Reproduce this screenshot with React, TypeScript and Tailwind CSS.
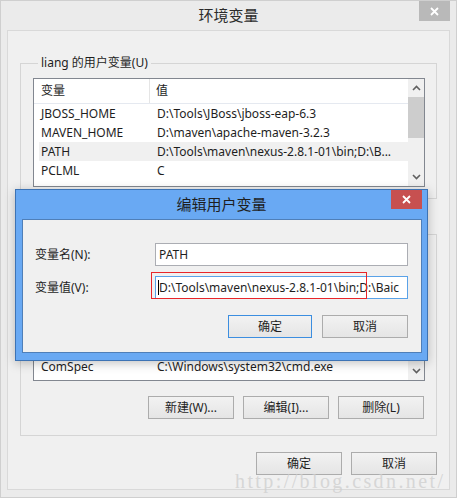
import clsx from "clsx";

const FONT = "font-['Noto_Sans','Noto_Sans_CJK_SC',sans-serif]";

function Chevron({ down }: { down?: boolean }) {
  return (
    <svg width="9" height="6" viewBox="0 0 9 6" className={clsx(down && "rotate-180")}>
      <polyline points="1,5 4.5,1.5 8,5" fill="none" stroke="#606060" strokeWidth="1.6" />
    </svg>
  );
}

function Scrollbar({ thumbTop, thumbHeight }: { thumbTop?: number; thumbHeight?: number }) {
  return (
    <div className="flex w-[16px] flex-col bg-[#f0f0f0]">
      <div className="flex h-[18px] items-center justify-center">
        <Chevron />
      </div>
      <div className="relative flex-1">
        {thumbHeight ? (
          <div className="absolute inset-x-0 bg-[#cdcdcd]" style={{ top: thumbTop, height: thumbHeight }} />
        ) : null}
      </div>
      <div className="flex h-[18px] items-center justify-center">
        <Chevron down />
      </div>
    </div>
  );
}

function Row({ name, value, selected }: { name: string; value: string; selected?: boolean }) {
  return (
    <div className={clsx("ml-[5px] flex h-[19px] shrink-0 items-center whitespace-nowrap", selected && "bg-[#f0f0f0]")}>
      <span className="w-[118px] pl-[2px]">{name}</span>
      <span className="overflow-hidden">{value}</span>
    </div>
  );
}

function VarList({
  rows,
  height,
  bottom,
  thumb,
}: {
  rows: { name: string; value: string; selected?: boolean }[];
  height: string;
  bottom?: boolean;
  thumb?: [number, number];
}) {
  return (
    <div className={clsx("flex border border-[#828790] bg-white", height)}>
      <div className="flex min-w-0 flex-1 flex-col overflow-hidden">
        <div className="flex h-[25px] shrink-0 border-b border-[#e5e9f0]">
          <div className="flex w-[116px] items-center border-r border-[#e5e5e5] pl-[7px]">变量</div>
          <div className="flex items-center pl-[6px]">值</div>
        </div>
        <div className={clsx("flex flex-1 flex-col overflow-hidden", bottom && "justify-end pb-[4px]")}>
          {rows.map((r) => (
            <Row key={r.name} {...r} />
          ))}
        </div>
      </div>
      <Scrollbar thumbTop={thumb?.[0]} thumbHeight={thumb?.[1]} />
    </div>
  );
}

function Btn({ children, primary, className }: { children: React.ReactNode; primary?: boolean; className?: string }) {
  return (
    <button
      className={clsx(
        "flex h-[23px] items-center justify-center border bg-gradient-to-b from-[#f2f2f2] to-[#e5e5e5] text-[12px] text-[#1e1e1e]",
        primary ? "border-[#3c8ee0]" : "border-[#acacac]",
        className
      )}
    >
      {children}
    </button>
  );
}

function Group({ label, children, className }: { label: string; children: React.ReactNode; className?: string }) {
  return (
    <div className={clsx("border border-[#d5d5d5] pl-[12px] pr-[11px]", className)}>
      <div className="-mt-[9px] mb-[7px] ml-[5px] w-fit bg-[#f0f0f0] px-[3px] leading-[16px]">{label}</div>
      {children}
    </div>
  );
}

function CloseX() {
  return (
    <svg width="9" height="9" viewBox="0 0 9 9">
      <path d="M1 1 L8 8 M8 1 L1 8" stroke="white" strokeWidth="1.8" />
    </svg>
  );
}

export default function App() {
  return (
    <div className={clsx("relative h-[498px] w-[457px] overflow-hidden border border-[#cfcfcf] bg-[#ebebeb] text-[12px] text-[#1e1e1e]", FONT)}>
      <div className="flex h-[29px] items-center justify-center text-[15px] text-[#2b2b2b]">环境变量</div>
      <div className="absolute right-[6px] top-0 flex h-[20px] w-[31px] items-center justify-center bg-[#b9b9b9]">
        <CloseX />
      </div>

      <div className="mx-[6px] h-[460px] border border-[#d9d9d9] bg-[#f0f0f0] px-[12px] pt-[32px]">
        <Group label="liang 的用户变量(U)" className="pb-[11px]">
          <VarList
            height="h-[109px]"
            thumb={[0, 41]}
            rows={[
              { name: "JBOSS_HOME", value: "D:\\Tools\\JBoss\\jboss-eap-6.3" },
              { name: "MAVEN_HOME", value: "D:\\maven\\apache-maven-3.2.3" },
              { name: "PATH", value: "D:\\Tools\\maven\\nexus-2.8.1-01\\bin;D:\\B...", selected: true },
              { name: "PCLML", value: "C" },
            ]}
          />
        </Group>

        <Group label="系统变量(S)" className="mt-[35px] pb-[16px]">
          <VarList
            height="h-[132px]"
            bottom
            rows={[{ name: "ComSpec", value: "C:\\Windows\\system32\\cmd.exe" }]}
          />
          <div className="mt-[15px] flex justify-end gap-[9px] pr-[1px]">
            <Btn className="w-[86px]">新建(W)...</Btn>
            <Btn className="w-[86px]">编辑(I)...</Btn>
            <Btn className="w-[86px]">删除(L)</Btn>
          </div>
        </Group>

        <div className="mt-[16px] flex justify-end gap-[9px]">
          <Btn className="w-[86px]">确定</Btn>
          <Btn className="w-[86px]">取消</Btn>
        </div>
      </div>

      {/* edit dialog */}
      <div className="absolute left-[14px] top-[188px] flex h-[172px] w-[413px] flex-col border border-[#3d73b4] bg-[#69a9f3] shadow-[0_2px_10px_rgba(0,0,0,0.25)]">
        <div className="flex h-[29px] shrink-0 items-center justify-center text-[15px] text-[#1e1e1e]">编辑用户变量</div>
        <div className="absolute right-[5px] top-0 flex h-[19px] w-[31px] items-center justify-center bg-[#c75050]">
          <CloseX />
        </div>
        <div className="relative mb-[7px] ml-[6px] mr-[5px] flex-1 border border-[#4f7fb8] bg-[#f0f0f0] pl-[12px] pr-[13px] pt-[23px]">
          <div className="flex items-center">
            <span className="w-[120px]">变量名(N):</span>
            <div className="flex h-[23px] flex-1 items-center border border-[#abadb3] bg-white pl-[3px]">PATH</div>
          </div>
          <div className="mt-[10px] flex items-center">
            <span className="w-[120px]">变量值(V):</span>
            <div className="flex h-[23px] flex-1 items-center overflow-hidden whitespace-nowrap border border-[#5aa2e8] bg-white pl-[2px]">
              <span className="h-[15px] w-px shrink-0 bg-black" />
              <span>D:\Tools\maven\nexus-2.8.1-01\bin;D:\Baic</span>
            </div>
          </div>
          <div className="mt-[16px] flex justify-end gap-[10px]">
            <Btn primary className="w-[84px]">确定</Btn>
            <Btn className="w-[86px]">取消</Btn>
          </div>
          <div className="absolute left-[128px] top-[52px] h-[27px] w-[216px] border border-[#e8262a]" />
        </div>
      </div>

      <div className="pointer-events-none absolute left-[234px] top-[465px] font-['Liberation_Serif',serif] text-[20px] tracking-[2.4px] text-[#cfcfcf]/80">
        http://blog.csdn.net/
      </div>
    </div>
  );
}
